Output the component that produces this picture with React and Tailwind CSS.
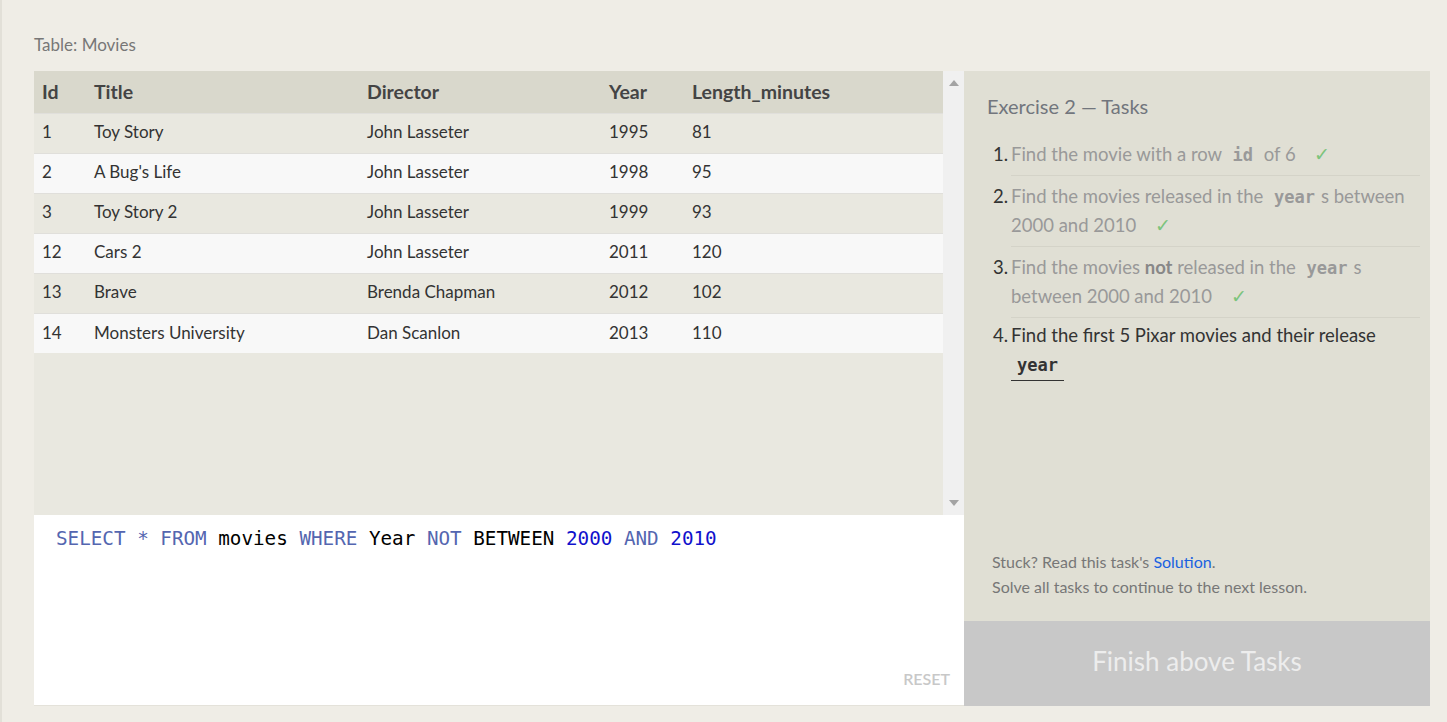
import React from "react";

const movies = [
  { id: 1, title: "Toy Story", director: "John Lasseter", year: 1995, len: 81 },
  { id: 2, title: "A Bug's Life", director: "John Lasseter", year: 1998, len: 95 },
  { id: 3, title: "Toy Story 2", director: "John Lasseter", year: 1999, len: 93 },
  { id: 12, title: "Cars 2", director: "John Lasseter", year: 2011, len: 120 },
  { id: 13, title: "Brave", director: "Brenda Chapman", year: 2012, len: 102 },
  { id: 14, title: "Monsters University", director: "Dan Scanlon", year: 2013, len: 110 },
];

const sans = "font-['Lato','Open_Sans',sans-serif]";
const mono = "font-['DejaVu_Sans_Mono',monospace]";

function Code({ children, dark }) {
  return (
    <code className={`${mono} font-bold text-[17px] leading-none inline-block px-[6px] ${dark ? "text-[#333] border-b border-[#333] pb-[6px] pt-[4px]" : "text-[#999]"}`}>
      {children}
    </code>
  );
}

function Check() {
  return <span className="text-[#7cc47c] ml-[14px]">✓</span>;
}

function Task({ n, done, last, children }) {
  return (
    <li className={`flex ${last ? "pt-[3px]" : "py-[6px] border-b border-[#d4d3c8]"} ${done ? "text-[#999]" : "text-[#333]"}`}>
      <span className="w-[24px] text-right pr-[3px] shrink-0 text-[#333] -ml-[24px]">{n}.</span>
      <div>{children}</div>
    </li>
  );
}

function MoviesTable() {
  return (
    <table className="w-full border-collapse text-left">
      <thead>
        <tr className="bg-[#d9d8cc] h-[42px] text-[19.5px] font-bold text-[#444]">
          <th className="pl-[8px] w-[60px]">Id</th>
          <th className="w-[273px]">Title</th>
          <th className="w-[242px]">Director</th>
          <th className="w-[83px]">Year</th>
          <th>Length_minutes</th>
        </tr>
      </thead>
      <tbody className="text-[17px] text-[#333]">
        {movies.map((m, i) => (
          <tr key={m.id} className={`h-[40px] border-t border-[#e0dfdb] ${i % 2 ? "bg-[#f8f8f8]" : "bg-[#e9e8e0]"}`}>
            <td className="pl-[8px] pb-[2px]">{m.id}</td>
            <td className="pb-[2px]">{m.title}</td>
            <td className="pb-[2px]">{m.director}</td>
            <td className="pb-[2px]">{m.year}</td>
            <td className="pb-[2px]">{m.len}</td>
          </tr>
        ))}
      </tbody>
    </table>
  );
}

export default function App() {
  return (
    <div className={`min-h-screen bg-[#efede6] border-l-2 border-[#e2e0d8] pl-[32px] pr-[17px] ${sans}`}>
      <div className="h-[71px] flex items-center text-[17px] text-[#777] pt-[18px]">Table: Movies</div>
      <div className="flex h-[635px]">
        <div className="w-[930px] flex flex-col">
          <div className="h-[444px] flex bg-[#e9e8e0]">
            <div className="flex-1">
              <MoviesTable />
            </div>
            <div className="w-[21px] bg-[#f0f0f0] flex flex-col justify-between items-center py-[9px]">
              <svg width="10" height="6" viewBox="0 0 10 6"><path d="M5 0L10 6H0z" fill="#a3a3a3" /></svg>
              <svg width="10" height="6" viewBox="0 0 10 6"><path d="M0 0H10L5 6z" fill="#a3a3a3" /></svg>
            </div>
          </div>
          <div className="flex-1 bg-white border-b border-[#e4e2da] flex flex-col justify-between px-[22px] pt-[10px] pb-[14px]">
            <div className={`${mono} text-[19.25px] whitespace-pre`}>
              <span className="text-[#5466b0]">SELECT * FROM</span>
              <span className="text-black"> movies </span>
              <span className="text-[#5466b0]">WHERE</span>
              <span className="text-black"> Year </span>
              <span className="text-[#5466b0]">NOT</span>
              <span className="text-black"> BETWEEN </span>
              <span className="text-[#1111cc]">2000</span>
              <span className="text-[#5466b0]"> AND </span>
              <span className="text-[#1111cc]">2010</span>
            </div>
            <div className="self-end text-[16px] font-semibold text-[#c8c8c8] -mr-[8px]">RESET</div>
          </div>
        </div>
        <div className="flex-1 bg-[#e0dfd4] flex flex-col">
          <div className="flex-1 flex flex-col pl-[23px] pr-[10px] pt-[21px]">
            <h2 className="text-[20px] text-[#72767d] leading-[28px]">Exercise 2 — Tasks</h2>
            <ol className="mt-[14px] pl-[24px] text-[18.5px] leading-[29px]">
              <Task n={1} done>
                Find the movie with a row <Code>id</Code> of 6 <Check />
              </Task>
              <Task n={2} done>
                Find the movies released in the <Code>year</Code>s between 2000 and 2010 <Check />
              </Task>
              <Task n={3} done>
                Find the movies <b className="text-[#888]">not</b> released in the <Code>year</Code>s between 2000 and 2010 <Check />
              </Task>
              <Task n={4} last>
                Find the first 5 Pixar movies and their release <Code dark>year</Code>
              </Task>
            </ol>
            <div className="mt-auto mb-[22px] text-[16px] leading-[25px] text-[#777] pl-[5px]">
              <p>Stuck? Read this task's <a className="text-[#1a62e0]">Solution</a>.</p>
              <p>Solve all tasks to continue to the next lesson.</p>
            </div>
          </div>
          <div className="h-[85px] bg-[#c8c8c8] flex items-center justify-center text-[26px] text-[#ededed] pb-[4px]">
            Finish above Tasks
          </div>
        </div>
      </div>
    </div>
  );
}
